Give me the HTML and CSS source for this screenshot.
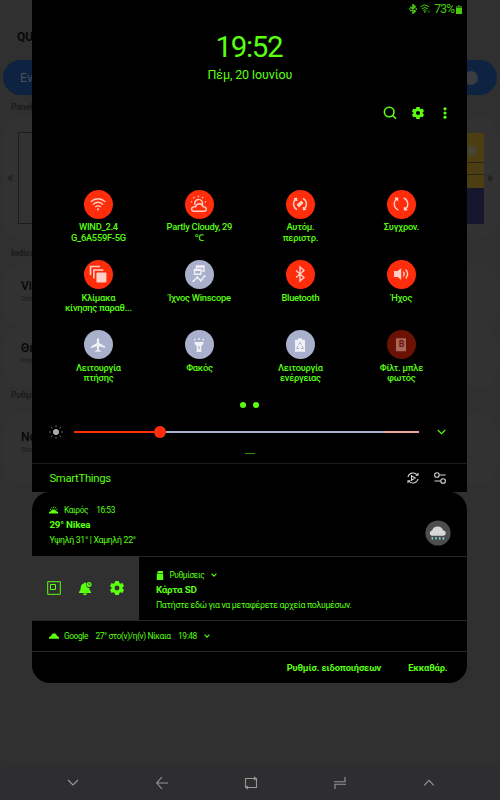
FILE: index.html
```
<!DOCTYPE html>
<html lang="el">
<head>
    <meta charset="UTF-8">
    <meta name="viewport" content="width=device-width, initial-scale=1.0">
    <title>Quick Panel</title>
    <link rel="stylesheet" href="styles.css">
</head>
<body>
    <div class="screen">
        <!-- App behind the panel -->
        <main class="app">
            <h1 class="app-title">QUICKSTAR</h1>
            <div class="app-switch"><span>Ενεργοποίηση</span><i class="knob"></i></div>
            <h2 class="app-section">Panel color</h2>
            <div class="app-card preview">
                <span class="arrow">«</span>
                <div class="preview-box"></div>
                <div class="preview-phone">
                    <div class="preview-top"><i></i></div>
                    <div class="preview-line"></div>
                    <div class="preview-line"></div>
                    <div class="preview-bottom"></div>
                </div>
                <span class="arrow">»</span>
            </div>
            <h2 class="app-section second">Indicator</h2>
            <div class="app-card item"><b>Visibility</b><small>Determine</small></div>
            <div class="app-card item next"><b>Θέση</b><small>Position</small></div>
            <h2 class="app-section third">Ρυθμίσεις</h2>
            <div class="app-card item last"><b>Notification</b><small>Show</small></div>
        </main>

        <nav class="navbar">
            <svg width="12" height="12" viewBox="0 0 12 12"><path d="M1 3l5 5 5-5"/></svg>
            <svg width="12" height="12" viewBox="0 0 12 12"><path d="M6 0L.7 6 6 12M.7 6H12"/></svg>
            <svg width="14" height="14" viewBox="0 0 14 14"><path d="M4 11.500H1.500v-9h10M10 .8l2 1.700-2 1.700M10 2.500h2.500v9h-10M4 9.800l-2 1.700 2 1.700"/></svg>
            <svg width="12" height="14" viewBox="0 0 12 14"><path d="M0 5.700h11V1M12 8.300H1V13"/></svg>
            <svg width="12" height="12" viewBox="0 0 12 12"><path d="M1.200 8.400L6 3.400l4.800 5"/></svg>
        </nav>

        <div class="shade">
            <section class="panel">
                <div class="status">
                    <svg width="8" height="10" viewBox="0 0 8 10"><path class="line bold" d="M1.300 2.700l5 4.600L4 9.300V.7l2.300 2-5 4.600"/><path d="M0 4.300h1.500v1.400H0zM6.400 4.300H8v1.400H6.400z"/></svg>
                    <svg width="11" height="10" viewBox="0 0 11 10"><path class="line" d="M.5 3q4.300-4 8.600 0M1.800 4.800q3-2.700 6 0M3.200 6.500q1.600-1.400 3.200 0"/><circle cx="4.800" cy="7.900" r=".8"/><path d="M7.500 7.500l1.200-1.800v3.600zM10.700 7.200L9.500 9V5.400z" opacity=".5"/></svg>
                    <span>73%</span>
                    <svg width="6" height="9" viewBox="0 0 6 9"><path d="M2 0h2v1h2v2H0V1h2z" opacity=".55"/><path d="M0 3h6v6H0z"/></svg>
                </div>
                <div class="clock">19:52</div>
                <div class="date">Πέμ, 20 Ιουνίου</div>
                <div class="tools">
                    <svg width="14" height="14" viewBox="0 0 14 14"><circle cx="6.200" cy="6" r="4.800" class="thick"/><path class="thick" d="M9.700 9.500l3.300 3.300"/></svg>
                    <svg width="12" height="12" viewBox="0 0 24 24"><use href="#gear"/></svg>
                    <svg width="4" height="12" viewBox="0 0 4 12"><circle cx="2" cy="1.800" r="1.600"/><circle cx="2" cy="6" r="1.600"/><circle cx="2" cy="10.200" r="1.600"/></svg>
                </div>

                <div class="tiles">
                    <div class="tile">
                        <div class="round on"><svg width="18" height="18" viewBox="0 0 18 18"><path d="M1.700 6.800q7.300-6.200 14.600 0M4 9.500q5-4.300 10 0M6.200 12q2.800-2.300 5.600 0"/><circle class="fill" cx="9" cy="14.300" r="1.100"/></svg></div>
                        <span>WIND_2.4<br>G_6A559F-5G</span>
                    </div>
                    <div class="tile">
                        <div class="round on"><svg width="18" height="18" viewBox="0 0 18 18"><path d="M3.900 16.300H14a2.200 2.200 0 0 0 0-4.400h-.9Q12.500 8.800 9.300 8.800T5.600 11.900H3.900a2.200 2.200 0 0 0 0 4.400zM4.900 10A4 4 0 1 1 12.400 9.600"/><path d="M8.300 2V.8M12.200 3l.8-1M4.300 3l-.8-1M1 6.900h1.200M14.900 6.900h1.200"/></svg></div>
                        <span>Partly Cloudy, 29<br>℃</span>
                    </div>
                    <div class="tile">
                        <div class="round on"><svg width="18" height="18" viewBox="0 0 18 18"><path d="M6 14.600A6.400 6.400 0 0 1 4.800 4.100M3 3.600l2.500-.2.100 2.600M12 3.400a6.400 6.400 0 0 1 1.200 10.500M15 14.400l-2.500.2-.1-2.600"/><path class="fill" d="M5.600 9.800l4.700-4.300 2.300 2.600-4.700 4.300z"/></svg></div>
                        <span>Αυτόμ.<br>περιστρ.</span>
                    </div>
                    <div class="tile">
                        <div class="round on"><svg width="18" height="18" viewBox="0 0 18 18"><path d="M6.300 15A6.500 6.500 0 0 1 5 3.700M2.800 3.300h2.700V6M11.700 3A6.500 6.500 0 0 1 13 14.300M15.200 14.700h-2.700V12"/></svg></div>
                        <span>Συγχρον.</span>
                    </div>
                    <div class="tile">
                        <div class="round on"><svg width="18" height="18" viewBox="0 0 18 18"><path class="thick" d="M1.500 10V1.500H11M4.900 13.500V5h9.500"/><rect class="fill" x="7.400" y="7.600" width="10" height="9.800" rx="1"/></svg></div>
                        <span>Κλίμακα<br>κίνησης παραθ...</span>
                    </div>
                    <div class="tile">
                        <div class="round"><svg width="18" height="18" viewBox="0 0 18 18"><path d="M6.500 4V1h7.500v5h-2M4.500 4.500H11v4.800H4.500zM6.500 2h7.500M4.500 5.300H11M3.300 16.300l4-4 3.500 3.500 4-5"/><circle class="fill" cx="3.300" cy="16.300" r="1"/><circle class="fill" cx="7.300" cy="12.300" r="1"/><circle class="fill" cx="10.800" cy="15.700" r="1"/><circle class="fill" cx="14.800" cy="10.900" r="1"/></svg></div>
                        <span>Ίχνος Winscope</span>
                    </div>
                    <div class="tile">
                        <div class="round on"><svg width="18" height="18" viewBox="0 0 18 18"><path d="M5 5.500l8 7L9 16V2l4 3.500-8 7"/></svg></div>
                        <span>Bluetooth</span>
                    </div>
                    <div class="tile">
                        <div class="round on"><svg width="18" height="18" viewBox="0 0 18 18"><path class="fill" d="M2 6h3.500L9.200 3.200v11.600L5.500 12H2z"/><path d="M11.300 6.700q1.900 2.300 0 4.600M13.700 4.500q3.800 4.500 0 9"/></svg></div>
                        <span>Ήχος</span>
                    </div>
                    <div class="tile">
                        <div class="round"><svg width="18" height="18" viewBox="0 0 18 18"><path class="fill" d="M9 2q1.200.6 1.200 2v3L16 10.500V12l-5.800-1.700-.3 3.400 1.900 1.400v1L9 15.500l-2.800.6v-1l1.900-1.400-.3-3.400L2 12v-1.500L7.800 7V4Q7.800 2.600 9 2z"/></svg></div>
                        <span>Λειτουργία<br>πτήσης</span>
                    </div>
                    <div class="tile">
                        <div class="round"><svg width="18" height="18" viewBox="0 0 18 18"><path class="fill" fill-rule="evenodd" d="M4.600 6h8.800v1.700l-2.100 2.500V16H6.700v-5.800L4.600 7.700zM8.400 10v3.200h1.200V10z"/><path d="M9 4V2M5.300 4.200L4.300 3M12.700 4.200l1-1.200"/></svg></div>
                        <span>Φακός</span>
                    </div>
                    <div class="tile">
                        <div class="round"><svg width="18" height="18" viewBox="0 0 18 18"><path class="fill" d="M7 2.300h4v1.500h3v12H4v-12h3z"/><path class="arrows" d="M7.500 8.800L9 6.500l1.500 2.300M11.200 10l1.100 2.500H10M8 12.500H5.700L6.800 10"/></svg></div>
                        <span>Λειτουργία<br>ενέργειας</span>
                    </div>
                    <div class="tile">
                        <div class="round dim"><svg width="18" height="18" viewBox="0 0 18 18"><path class="fill" d="M4 2.300h10v13H4z"/></svg><b>B</b></div>
                        <span>Φίλτ. μπλε<br>φωτός</span>
                    </div>
                </div>

                <div class="dots"><i></i><i></i></div>

                <div class="brightness">
                    <svg width="14" height="14" viewBox="0 0 14 14"><circle cx="7" cy="7" r="2.600"/><path d="M7 .5v1.200M7 12.300v1.200M.5 7h1.200M12.300 7h1.200M2.400 2.400l.8.8M10.800 10.800l.8.8M2.400 11.600l.8-.8M10.800 3.200l.8-.8"/></svg>
                    <div class="track">
                        <div class="track-fill"></div>
                        <div class="thumb"></div>
                        <div class="track-rest"></div>
                        <div class="track-hot"></div>
                    </div>
                    <svg class="chevron" width="9" height="6" viewBox="0 0 9 6"><path d="M.8 1l3.700 3.700L8.200 1"/></svg>
                </div>
                <div class="handle"></div>

                <div class="devices">
                    <span>SmartThings</span>
                    <svg width="12" height="12" viewBox="0 0 12 12"><path d="M1 5A5.200 5.200 0 0 1 10.200 3M11 1v2.300H8.600M11 7A5.200 5.200 0 0 1 1.800 9M1 11V8.700h2.400M4.500 3.700v4.600L8.200 6z"/></svg>
                    <svg width="12" height="12" viewBox="0 0 12 12"><circle cx="2.900" cy="3" r="2.300"/><circle cx="9.100" cy="9" r="2.300"/><path d="M5.500 3h6M.5 9h6"/></svg>
                </div>
            </section>

            <section class="notifications">
                <article class="weather">
                    <div>
                        <div class="meta">
                            <svg width="9" height="8" viewBox="0 0 9 8"><path d="M0 7.500V6l2-1 1.200-1.500h2.600L7.200 5 9 6v1.500z"/><path class="line" d="M1 3l1 .7M2.800 1.300l.4 1M4.700.6v1.200M6.700 1.300l-.5 1M8.300 3l-1 .7"/></svg>
                            <span>Καιρός</span><span class="time">16:53</span>
                        </div>
                        <h3>29° Nikea</h3>
                        <p>Υψηλή 31° | Χαμηλή 22°</p>
                    </div>
                    <svg width="26" height="26" viewBox="0 0 26 26"><circle cx="13" cy="13" r="12.600" fill="#4d4d4d"/><path fill="#d8d8d8" d="M6.700 15.700a2.600 2.600 0 0 1 .4-5.100 5.700 5.700 0 0 1 11 0 2.600 2.600 0 0 1 .8 5.100z"/><path fill="#82dcd7" d="M6.600 17.200h1.500v2.200H6.600zM10.300 17.200h1.500v2.200h-1.500zM14 17.200h1.500v2.200H14zM17.700 17.200h1.500v2.200h-1.500z"/></svg>
                </article>
                <article class="swiped">
                    <div class="actions">
                        <svg width="14" height="14" viewBox="0 0 14 14"><path class="line" d="M.7.700h12.600v12.600H.7zM3.500 3.500h5v5h-5z"/></svg>
                        <svg width="15" height="15" viewBox="0 0 15 15"><path d="M7 1.500q1 0 1.200 1Q7.300 4.600 9 6.300q1 .8 2.300.7 0 2.300 1.700 4v1H1v-1q1.800-1.700 1.800-4.500Q2.800 3.300 5.800 2.500 6 1.500 7 1.500zM4.700 12.500h4.600q-.5 1.700-2.300 1.700t-2.300-1.700z"/><circle cx="11" cy="3.500" r="2.500"/><path d="M11 2v1.700h1.200" fill="none" stroke="#303030" stroke-width=".8"/></svg>
                        <svg width="14" height="14" viewBox="0 0 24 24"><use href="#gear"/></svg>
                    </div>
                    <div class="sd">
                        <div class="meta">
                            <svg width="8" height="9" viewBox="0 0 8 9"><path d="M2.500 0H7v2H1.300V1zM.8 2.600h6.400V9H.8z"/></svg>
                            <span>Ρυθμίσεις</span>
                            <svg class="chevron" width="6" height="4" viewBox="0 0 6 4"><path d="M.6.700L3 3.100 5.400.7"/></svg>
                        </div>
                        <h3>Κάρτα SD</h3>
                        <p>Πατήστε εδώ για να μεταφέρετε αρχεία πολυμέσων.</p>
                    </div>
                </article>
                <article class="google meta">
                    <svg width="10" height="6" viewBox="0 0 10 6"><path d="M0 5.700V4.300L2 3Q2.800.3 5 .3T7.800 2.500L10 4.300v1.400z"/></svg>
                    <span>Google</span><span class="place">27° στο(ν)/η(ν) Νίκαια</span><span class="when">19:48</span>
                    <svg class="chevron" width="6" height="4" viewBox="0 0 6 4"><path d="M.6.700L3 3.100 5.400.7"/></svg>
                </article>
                <footer>
                    <span class="settings">Ρυθμίσ. ειδοποιήσεων</span>
                    <span>Εκκαθάρ.</span>
                </footer>
            </section>
        </div>
    </div>

    <svg class="defs" width="0" height="0">
        <symbol id="gear" viewBox="0 0 24 24"><path fill-rule="evenodd" d="M8.800 0h6.400l.8 3.600 1.900 1.100L21.400 3.600l2.600 5L21.300 11v2l2.700 2.400-2.600 5-3.500-1.100-1.900 1.100-.8 3.600H8.800L8 20.400l-1.900-1.100-3.500 1.100-2.600-5L2.700 13v-2L0 8.600l2.600-5 3.500 1.100L8 3.600zM12 7.800a4.200 4.200 0 1 0 0 8.400 4.200 4.200 0 0 0 0-8.400z"/></symbol>
    </svg>
</body>
</html>
```
FILE: styles.css
```
* {
    box-sizing: border-box;
}
body {
    margin: 0;
    font-family: Roboto, "Noto Sans", sans-serif;
    background: #303030;
}
h1, h2, h3, p {
    margin: 0;
}
svg {
    display: block;
    flex: none;
}
.defs {
    position: absolute;
}
.screen {
    position: relative;
    width: 500px;
    height: 800px;
    overflow: hidden;
    display: flex;
    flex-direction: column;
}

/* app behind */
.app {
    height: 766px;
    background: #303030;
    border-radius: 0 0 16px 16px;
    overflow: hidden;
    white-space: nowrap;
}
.app-title {
    padding: 29px 0 0 17px;
    height: 60px;
    font-size: 12px;
    line-height: 16px;
    color: #080808;
}
.app-switch {
    display: flex;
    align-items: center;
    justify-content: space-between;
    height: 35px;
    margin: 0 3px;
    padding: 0 19px 0 17px;
    border-radius: 18px;
    background: #0d2341;
    color: #4b5158;
    font-size: 12.5px;
}
.knob {
    width: 14px;
    height: 14px;
    border-radius: 50%;
    background: #393c40;
}
.app-section {
    padding: 7px 0 0 11px;
    height: 22px;
    font-size: 8.5px;
    line-height: 11px;
    color: #1b1b1b;
}
.app-card {
    margin: 0 3px;
    border-radius: 16px;
    background: #323232;
}
.preview {
    display: flex;
    align-items: center;
    justify-content: space-between;
    height: 122px;
    padding: 0 4px;
}
.preview-box {
    width: 120px;
    height: 92px;
    margin: 0 auto 0 4px;
    border: 1px solid #1d1d1d;
}
.preview-phone {
    width: 60px;
    height: 91px;
    background: #4b3e13;
    margin-right: 2px;
}
.preview-top {
    height: 29px;
    padding: 13px 0 0 43px;
}
.preview-top i {
    display: block;
    width: 10px;
    height: 10px;
    border-radius: 50%;
    background: #484436;
}
.preview-line {
    height: 12px;
    border-top: 1px solid #272415;
}
.preview-bottom {
    height: 36px;
    margin-top: 2px;
    background: #16172f;
}
.arrow {
    padding-bottom: 2px;
    color: #1a1a1a;
    font-size: 14px;
}
.second {
    height: 26px;
    padding-top: 9px;
}
.item {
    height: 61px;
    padding: 14px 18px;
}
.item b, .item small {
    display: block;
}
.item b {
    font-size: 12px;
    line-height: 15px;
    font-weight: 500;
    color: #060606;
}
.item small {
    font-size: 7px;
    line-height: 10px;
    color: #1b1b1b;
}
.next {
    padding-top: 15px;
}
.third {
    height: 27px;
    padding-top: 3px;
}
.last {
    padding-top: 16px;
    height: 70px;
}

.navbar {
    height: 34px;
    padding: 0 27px 0 29px;
    display: grid;
    grid-template-columns: repeat(5, 1fr);
    align-items: center;
    justify-items: center;
    background: #2e2e30;
}
.navbar svg {
    fill: none;
    stroke: #989898;
    stroke-width: 1.1;
}

/* quick panel */
.shade {
    position: absolute;
    top: 0;
    left: 32.4px;
    width: 435px;
    height: 683px;
    color: #5aff10;
    fill: #5aff10;
}
.line {
    fill: none;
    stroke: #5aff10;
    stroke-width: 1;
}
.line.bold {
    stroke-width: 1.4;
}
.thick {
    fill: none;
    stroke: #5aff10;
    stroke-width: 1.6;
}
.panel {
    height: 492px;
    background: #000;
}
.status {
    display: flex;
    justify-content: flex-end;
    align-items: center;
    height: 18px;
    padding-right: 5.500px;
    gap: 3px;
    font-size: 12px;
    opacity: .8;
}
.status span {
    margin-right: -1.500px;
    letter-spacing: -0.7px;
}
.clock {
    height: 46px;
    padding: 12px 2px 0 0;
    font-size: 29.5px;
    line-height: 35px;
    font-weight: 400;
    letter-spacing: -1.3px;
    text-align: center;
}
.date {
    height: 20px;
    font-size: 12.5px;
    line-height: 21px;
    letter-spacing: -0.15px;
    text-align: center;
}
.tools {
    display: flex;
    justify-content: flex-end;
    align-items: center;
    height: 57px;
    padding-right: 20px;
    gap: 15px;
}
.tools svg:last-child {
    margin-left: 4px;
}
.tiles {
    display: grid;
    grid-template-columns: repeat(4, 101px);
    grid-auto-rows: 70.2px;
    padding: 48.500px 0 0 15.500px;
    height: 259px;
}
.tile {
    display: flex;
    flex-direction: column;
    align-items: center;
    font-size: 9.3px;
    line-height: 10.4px;
    font-weight: 500;
    letter-spacing: -0.25px;
    text-align: center;
    white-space: nowrap;
}
.round {
    display: flex;
    align-items: center;
    justify-content: center;
    width: 29.4px;
    height: 29.4px;
    margin-bottom: 3.6px;
    border-radius: 50%;
    background: #a9b0cb;
}
.round.on {
    background: #ff2d0b;
}
.round.dim {
    background: #6b1205;
}
.round svg {
    fill: none;
    stroke: #f1f1f5;
    stroke-width: 1.4;
}
.round .fill {
    fill: #f1f1f5;
    stroke: none;
}
.round.on svg,
.round.on .thick {
    stroke: #ffd0c8;
}
.round.on .fill {
    fill: #ffd0c8;
}
.round.dim .fill {
    fill: #a9675d;
}
.round .arrows {
    stroke: #a9b0cb;
    stroke-width: 1;
}
.dim b {
    width: 18px;
    margin-left: -18px;
    font-size: 9px;
    color: #6b1205;
}
.dots {
    display: flex;
    justify-content: center;
    gap: 7px;
    height: 18px;
    padding-top: 2px;
}
.dots i {
    width: 6px;
    height: 6px;
    border-radius: 50%;
    background: #5aff10;
}
.brightness {
    display: flex;
    align-items: center;
    height: 27px;
    padding-left: 17px;
}
.brightness svg {
    fill: #aaa;
    stroke: #aaa;
}
.track {
    display: flex;
    align-items: center;
    width: 345px;
    margin: 0 18px 0 10.500px;
}
.track-fill {
    width: 80.500px;
    height: 2px;
    background: #ff2d0b;
}
.thumb {
    width: 12px;
    height: 12px;
    border-radius: 50%;
    background: #ff2d0b;
}
.track-rest {
    width: 218px;
    height: 2px;
    background: #a9b0cb;
}
.track-hot {
    flex: 1;
    height: 2px;
    background: #eca99a;
}
.shade .chevron {
    fill: none;
    stroke: #5aff10;
    stroke-width: 1.1;
}
.handle {
    width: 10px;
    height: 1px;
    margin: 8px auto 9px;
    background: #329504;
}
.devices {
    display: flex;
    align-items: center;
    height: 29px;
    padding: 0 21px 0 17px;
    gap: 15px;
    border-top: 1px solid #1d1d1d;
    font-size: 11.3px;
    letter-spacing: -0.3px;
}
.devices span {
    margin-right: auto;
}
.devices svg {
    fill: none;
    stroke: #d5d5d5;
    stroke-width: 1.1;
}

/* notifications */
.notifications {
    height: 191px;
    border-radius: 18px;
    overflow: hidden;
    background: #000;
    font-size: 8.8px;
    font-weight: 500;
    white-space: nowrap;
}
.weather {
    display: flex;
    justify-content: space-between;
    height: 64px;
    padding: 13px 16px 0 17px;
}
.weather > svg {
    margin-top: 15px;
}
.meta {
    display: flex;
    align-items: center;
    height: 10px;
    font-size: 8.4px;
    font-weight: 400;
    letter-spacing: -0.4px;
}
.meta span {
    margin-left: 5.500px;
}
.meta .time {
    margin-left: 8px;
}
.notifications h3 {
    font-size: 9.8px;
    line-height: 12px;
    letter-spacing: -0.2px;
    margin-top: 4px;
}
.notifications p {
    line-height: 12px;
    margin-top: 3px;
    font-weight: 400;
    letter-spacing: -0.33px;
}
.swiped {
    display: flex;
    height: 64px;
}
.actions {
    display: flex;
    align-items: center;
    justify-content: space-between;
    width: 107px;
    padding: 0 15px;
    background: #303030;
}
.sd {
    flex: 1;
    padding: 13px 0 0 16.500px;
    border-top: 1px solid #282828;
}
.sd .chevron {
    margin-left: 7px;
}
.notifications .google {
    height: 31px;
    padding-left: 17px;
    border-top: 1px solid #282828;
}
.google > span:first-of-type {
    margin-left: 4.500px;
}
.google .place, .google .when {
    margin-left: 7.500px;
}
.google .chevron {
    margin-left: 7px;
}
.notifications footer {
    display: flex;
    align-items: center;
    justify-content: flex-end;
    height: 32px;
    padding-right: 20px;
    gap: 27px;
    border-top: 1px solid #282828;
    font-size: 9.3px;
    font-weight: 700;
    letter-spacing: -0.12px;
}
```
